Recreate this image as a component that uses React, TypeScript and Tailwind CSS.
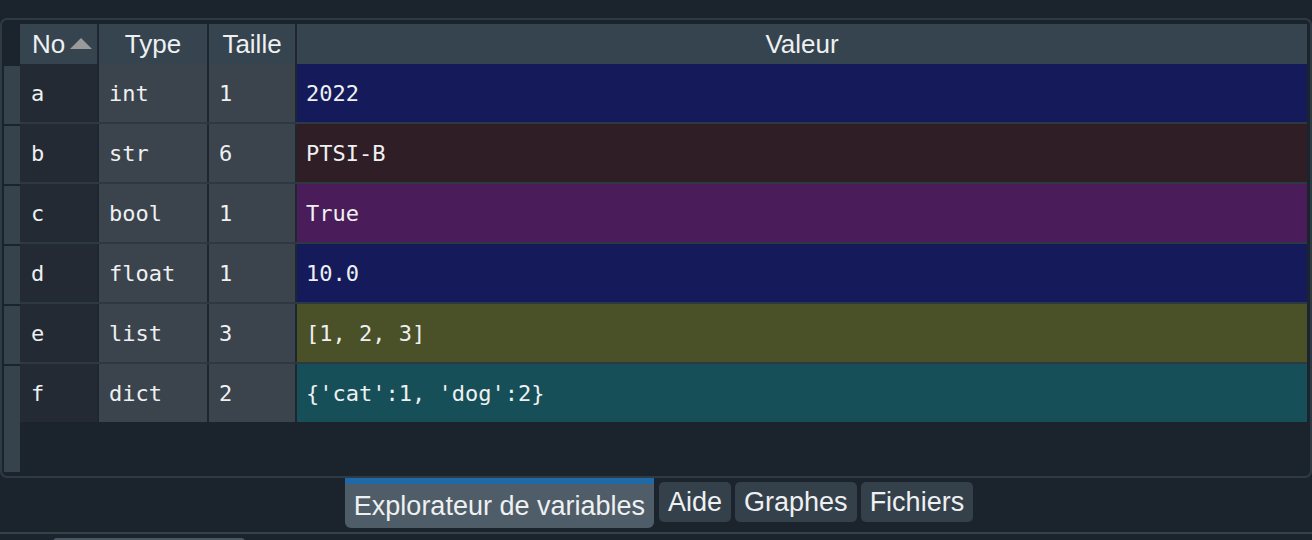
const rows = [
  { no: "a", type: "int", size: "1", value: "2022", bg: "bg-[#151b5a]" },
  { no: "b", type: "str", size: "6", value: "PTSI-B", bg: "bg-[#2f1e25]" },
  { no: "c", type: "bool", size: "1", value: "True", bg: "bg-[#4a1d5a]" },
  { no: "d", type: "float", size: "1", value: "10.0", bg: "bg-[#151b5a]" },
  { no: "e", type: "list", size: "3", value: "[1, 2, 3]", bg: "bg-[#4a5027]" },
  { no: "f", type: "dict", size: "2", value: "{'cat':1, 'dog':2}", bg: "bg-[#164f58]" },
];

const mono = "font-['DejaVu_Sans_Mono',monospace] text-[22px] text-[#eef0f2]";
const sans = "font-['Liberation_Sans',Arial,sans-serif] text-[26px] text-[#eef0f2]";

export default function App() {
  return (
    <div className="w-[1312px] h-[540px] overflow-hidden bg-[#1b232c] flex flex-col">
      <div className="h-[18px] shrink-0" />

      {/* Variable explorer frame */}
      <div className="h-[460px] shrink-0 border-2 border-[#2e3b45] rounded-[7px] pt-[4px] pb-[4px] pl-[2px] pr-[3px] flex">
        {/* row header strip */}
        <div className="w-[16px] flex flex-col gap-[2px]">
          <div className="h-[40px] shrink-0" />
          {rows.slice(0, 5).map((r) => (
            <div key={r.no} className="h-[58px] shrink-0 bg-[#36434d]" />
          ))}
          <div className="flex-1 bg-[#36434d]" />
        </div>

        <div className="flex-1 flex flex-col">
          {/* header */}
          <div className={`h-[40px] flex gap-[2px] bg-[#1e2730] ${sans}`}>
            <div className="w-[77px] bg-[#35444e] flex items-center pl-[12px] gap-[5px]">
              <span>No</span>
              <svg width="22" height="11" viewBox="0 0 22 11" className="mt-[-2px]">
                <polygon points="11,0 22,11 0,11" fill="#9a9a9a" />
              </svg>
            </div>
            <div className="w-[108px] bg-[#35444e] flex items-center justify-center">Type</div>
            <div className="w-[86px] bg-[#35444e] flex items-center justify-center">Taille</div>
            <div className="flex-1 bg-[#35444e] flex items-center justify-center">Valeur</div>
          </div>

          {/* rows */}
          <div className="flex flex-col gap-[2px] bg-[#2c3943]">
            {rows.map((r) => (
              <div key={r.no} className={`h-[58px] flex gap-[2px] bg-[#1e2730] ${mono}`}>
                <div className="w-[77px] bg-[#232a33] flex items-center pl-[11px]">{r.no}</div>
                <div className="w-[108px] bg-[#3b434c] flex items-center pl-[10px]">{r.type}</div>
                <div className="w-[86px] bg-[#3b434c] flex items-center pl-[10px]">{r.size}</div>
                <div className={`flex-1 ${r.bg} flex items-center pl-[9px]`}>{r.value}</div>
              </div>
            ))}
          </div>
          <div className="flex-1" />
        </div>
      </div>

      {/* tabs */}
      <div className="h-[54px] shrink-0 flex justify-center items-start gap-[4px] pl-[6px] font-['Liberation_Sans',Arial,sans-serif] text-[27px] text-[#eef0f2]">
        <div className="h-[50px] border-t-[6px] border-[#1f6aa6] bg-[#4f5d68] rounded-b-[6px] px-[9px] flex items-center mr-[1px]">
          Explorateur de variables
        </div>
        <div className="mt-[4px] h-[40px] bg-[#34414b] rounded-[5px] px-[9px] flex items-center">Aide</div>
        <div className="mt-[4px] h-[40px] bg-[#34414b] rounded-[5px] px-[9px] flex items-center">Graphes</div>
        <div className="mt-[4px] h-[40px] bg-[#34414b] rounded-[5px] px-[9px] flex items-center">Fichiers</div>
      </div>

      <div className="h-[2px] shrink-0 bg-[#34424c]" />
      <div className="flex-1 pt-[4px] pl-[53px]">
        <div className="w-[192px] h-[6px] rounded-t-[4px] bg-[#4a5762]" />
      </div>
    </div>
  );
}
